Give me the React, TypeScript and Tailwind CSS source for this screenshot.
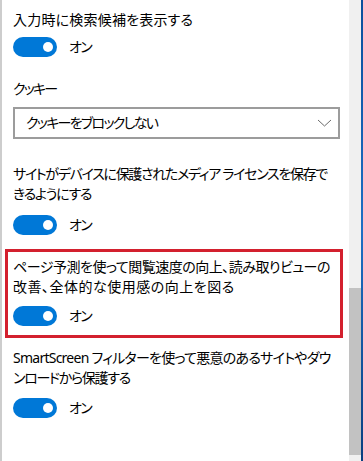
import React from "react";

const font = { fontFamily: '"Noto Sans", "Noto Sans CJK JP", sans-serif' };

const Toggle = () => (
  <div className="flex items-center">
    <div className="flex h-[20px] w-[44px] items-center justify-end rounded-full bg-[#0078d7] pr-[4px]">
      <div className="h-[10px] w-[10px] rounded-full bg-white" />
    </div>
    <span className="ml-[12px] text-[14px] leading-[20px] tracking-[-1.6px] text-black">オン</span>
  </div>
);

const App = () => {
  return (
    <div
      className="flex h-[461px] w-[363px] overflow-hidden bg-white [font-feature-settings:'palt']"
      style={font}
    >
      {/* left frame edge */}
      <div className="w-[2px] shrink-0 bg-[#cdcdcd]" />

      {/* settings content */}
      <div className="min-w-0 flex-1 overflow-hidden pl-[11px] pr-[7px] pt-[10px] text-[14px] leading-[20px] text-black whitespace-nowrap">
        <p className="tracking-[0.2px]">入力時に検索候補を表示する</p>
        <div className="mt-[7px]">
          <Toggle />
        </div>

        <p className="mt-[22px] tracking-[-1.8px]">クッキー</p>
        <div className="mt-[8px] flex h-[32px] w-[327px] items-center justify-between border-2 border-[#9c9c9c] pl-[11px] pr-[6px]">
          <span className="tracking-[-1.7px]">クッキーをブロックしない</span>
          <svg width="15" height="8" viewBox="0 0 15 8" fill="none">
            <path d="M1 1l6.5 6L14 1" stroke="#6b6b6b" strokeWidth="1" />
          </svg>
        </div>

        <p className="mt-[25px]">
          <span className="tracking-[-1.3px]">サイトがデバイスに保護されたメディア ライセンスを保存で</span>
          <br />
          <span className="tracking-[-1.3px]">きるようにする</span>
        </p>
        <div className="mt-[11px]">
          <Toggle />
        </div>

        {/* highlighted block */}
        <div className="-ml-[8px] mt-[14px] w-[338px] border-[3px] border-[#d3202e] pb-[9px] pl-[5px] pt-[5px]">
          <p>
            <span className="tracking-[-0.5px]">ページ予測を使って閲覧速度の向上、読み取りビューの</span>
            <br />
            <span className="tracking-[0.5px]">改善、全体的な使用感の向上を図る</span>
          </p>
          <div className="mt-[9px]">
            <Toggle />
          </div>
        </div>

        <p className="mt-[10px]">
          <span className="tracking-[-0.75px]">SmartScreen フィルターを使って悪意のあるサイトやダウ</span>
          <br />
          <span className="tracking-[-1.3px]">ンロードから保護する</span>
        </p>
        <div className="mt-[10px]">
          <Toggle />
        </div>
      </div>

      {/* scrollbar */}
      <div className="flex w-[12px] shrink-0 flex-col bg-[#f0f0f0]">
        <div className="h-[288px]" />
        <div className="h-[167px] bg-[#c2c2c2]" />
      </div>

      {/* desktop edge */}
      <div className="w-[2px] shrink-0 bg-gradient-to-b from-[#0b4f9c] via-[#1e6fc4] to-[#0a3f80]" />
    </div>
  );
};

export default App;
